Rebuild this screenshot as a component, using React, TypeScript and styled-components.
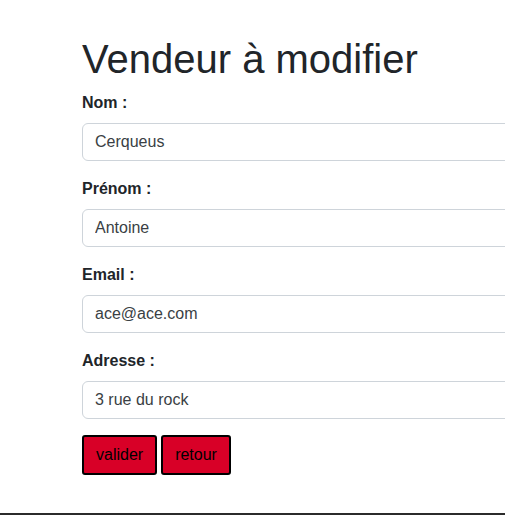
import styled, { createGlobalStyle } from "styled-components";

const GlobalStyle = createGlobalStyle`
  html, body {
    margin: 0;
    padding: 0;
    background: white;
    overflow: hidden;
  }
  body {
    font-family: "Liberation Sans", Arial, sans-serif;
    color: #212529;
  }
`;

const Page = styled.div`
  width: 505px;
  height: 515px;
  display: flex;
  flex-direction: column;
  overflow: hidden;
`;

const Main = styled.main`
  flex: 1;
  padding: 35px 0 0 82px;
`;

const Title = styled.h1`
  margin: 0 0 8px;
  font-size: 40px;
  font-weight: 500;
  line-height: 48px;
  color: #212529;
`;

const Form = styled.form`
  display: flex;
  flex-direction: column;
`;

const Field = styled.div`
  display: flex;
  flex-direction: column;
  margin-bottom: 16px;
`;

const Label = styled.label`
  font-size: 16px;
  font-weight: 700;
  line-height: 24px;
  margin-bottom: 8px;
`;

const Input = styled.input`
  width: 520px;
  height: 38px;
  box-sizing: border-box;
  padding: 6px 12px;
  border: 1px solid #ced4da;
  border-radius: 6px;
  font-family: inherit;
  font-size: 16px;
  line-height: 24px;
  color: #3a3f44;
  background: white;
  outline: none;
`;

const Actions = styled.div`
  display: flex;
  gap: 4px;
`;

const Button = styled.button`
  height: 40px;
  padding: 0 12px;
  background: #d80027;
  border: 2px solid #000;
  border-radius: 3px;
  font-family: inherit;
  font-size: 16px;
  color: #000;
  cursor: pointer;
`;

const Footer = styled.footer`
  height: 2px;
  background: #2b2b2b;
`;

const fields = [
  { label: "Nom :", value: "Cerqueus" },
  { label: "Prénom :", value: "Antoine" },
  { label: "Email :", value: "ace@ace.com" },
  { label: "Adresse :", value: "3 rue du rock" },
];

export default function App() {
  return (
    <Page>
      <GlobalStyle />
      <Main>
        <Title>Vendeur à modifier</Title>
        <Form onSubmit={(e) => e.preventDefault()}>
          {fields.map((f) => (
            <Field key={f.label}>
              <Label>{f.label}</Label>
              <Input defaultValue={f.value} />
            </Field>
          ))}
          <Actions>
            <Button type="submit">valider</Button>
            <Button type="button">retour</Button>
          </Actions>
        </Form>
      </Main>
      <Footer />
    </Page>
  );
}
